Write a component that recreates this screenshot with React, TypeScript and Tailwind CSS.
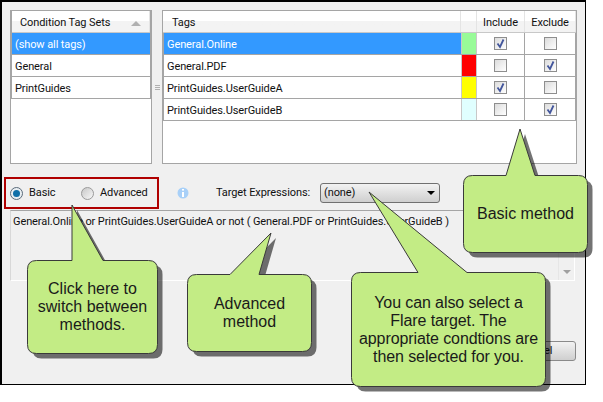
const rows = [
  { name: "General.Online", swatch: "bg-[#98fb98]", include: true, selected: true },
  { name: "General.PDF", swatch: "bg-[#ff0000]", include: false, selected: false },
  { name: "PrintGuides.UserGuideA", swatch: "bg-[#ffff00]", include: true, selected: false },
  { name: "PrintGuides.UserGuideB", swatch: "bg-[#e0ffff]", include: false, selected: false },
]

const tagSets = ["(show all tags)", "General", "PrintGuides"]

// body box + tail: tip point, then the two points where the tail meets the body edge
const balloon = (
  x1: number,
  y1: number,
  x2: number,
  y2: number,
  tipX: number,
  tipY: number,
  baseA: number,
  baseB: number,
) => {
  const r = 9
  return [
    `M${x1 + r} ${y1}`,
    `L${baseA} ${y1}`,
    `L${tipX} ${tipY}`,
    `L${baseB} ${y1}`,
    `L${x2 - r} ${y1}`,
    `Q${x2} ${y1} ${x2} ${y1 + r}`,
    `L${x2} ${y2 - r}`,
    `Q${x2} ${y2} ${x2 - r} ${y2}`,
    `L${x1 + r} ${y2}`,
    `Q${x1} ${y2} ${x1} ${y2 - r}`,
    `L${x1} ${y1 + r}`,
    `Q${x1} ${y1} ${x1 + r} ${y1}`,
    "Z",
  ].join(" ")
}

const balloons = [
  balloon(463.5, 175.5, 587.5, 252.5, 520, 129, 506, 535),
  balloon(27.5, 260.5, 157.5, 353.5, 72, 205, 72, 103),
  balloon(187.5, 274.5, 311.5, 351.5, 271, 233, 230, 259),
  balloon(351.5, 272.5, 545.5, 386.5, 369, 192, 418, 467),
]

const HeaderCell = ({ className, children }: { className: string; children?: React.ReactNode }) => (
  <div
    className={`flex h-[21px] items-center border-r border-[#e4e4e4] bg-gradient-to-b from-white from-50% to-[#f3f3f3] to-50% pt-[4px] ${className}`}
  >
    {children}
  </div>
)

const Checkbox = ({ checked }: { checked: boolean }) => (
  <div className="flex h-[13px] w-[13px] items-center justify-center border border-[#8e8e8e] bg-gradient-to-br from-[#dcdcdc] to-white">
    {checked && (
      <svg width="11" height="11" viewBox="0 0 11 11">
        <path d="M2.5 5.5 L5 9 L8.5 1.5" fill="none" stroke="#43569c" strokeWidth="1.8" />
      </svg>
    )}
  </div>
)

export default function App() {
  return (
    <div className="relative h-[402px] w-[603px] overflow-hidden bg-white font-['Roboto',sans-serif] text-[11px] tracking-[-0.1px] text-[#111]">
      <div className="flex h-[385px] w-[586px] flex-col border-t-2 border-r border-b border-l-2 border-black bg-[#f0f0f0] pt-2 pl-2">
        <div className="flex items-center">
          <div className="h-[154px] w-[142px] border border-[#a5a5a5] bg-white">
            <div className="border-x border-[#a5a5a5]">
              <div className="flex border-b border-[#c8c8c8]">
                <HeaderCell className="w-full justify-between pr-2 pl-2 text-[#111]">
                  <span>Condition Tag Sets</span>
                  <span className="h-0 w-0 border-x-[5px] border-b-[5px] border-x-transparent border-b-[#b0b0b0]" />
                </HeaderCell>
              </div>
              {tagSets.map((name, i) => (
                <div
                  key={name}
                  className={`flex h-[22px] items-center border-b border-[#a5a5a5] pt-[3px] pl-[3px] ${i === 0 ? "bg-[#3399ff] text-white" : "bg-white"}`}
                >
                  {name}
                </div>
              ))}
            </div>
          </div>
          <div className="flex w-[10px] flex-col items-center gap-px">
            <span className="h-px w-[5px] bg-[#b0b0b0]" />
            <span className="h-px w-[5px] bg-[#b0b0b0]" />
            <span className="h-px w-[5px] bg-[#b0b0b0]" />
          </div>
          <div className="h-[154px] w-[415px] border border-[#a5a5a5] bg-white">
            <div className="flex border-b border-[#c8c8c8]">
              <HeaderCell className="w-[298px] pl-[9px]">Tags</HeaderCell>
              <HeaderCell className="w-[16px]" />
              <HeaderCell className="w-[48px] justify-center">Include</HeaderCell>
              <HeaderCell className="w-[51px] justify-center">Exclude</HeaderCell>
            </div>
            {rows.map((row) => (
              <div key={row.name} className="flex h-[22px] border-b border-[#a5a5a5]">
                <div
                  className={`flex w-[298px] items-center border-l border-[#a5a5a5] pt-[3px] pl-[3px] ${row.selected ? "bg-[#3399ff] text-white" : ""}`}
                >
                  {row.name}
                </div>
                <div className={`w-[16px] border-x border-[#c8c8c8] ${row.swatch}`} />
                <div className="flex w-[48px] items-center justify-center border-r border-[#a5a5a5]">
                  <Checkbox checked={row.include} />
                </div>
                <div className="flex w-[51px] items-center justify-center border-r border-[#a5a5a5]">
                  <Checkbox checked={!row.include} />
                </div>
              </div>
            ))}
          </div>
        </div>

        <div className="mt-[19px] flex h-[20px] items-center">
          <span className="flex h-[13px] w-[13px] items-center justify-center rounded-full border border-[#5b6b7a] bg-[#e8eef2]">
            <span className="h-[7px] w-[7px] rounded-full bg-[#0f6fa8]" />
          </span>
          <span className="ml-[6px] w-[52px] pt-[1px]">Basic</span>
          <span className="h-[13px] w-[13px] rounded-full border border-[#9a9a9a] bg-gradient-to-br from-[#c8c8c8] to-[#f8f8f8]" />
          <span className="ml-[6px] w-[77px] pt-[1px]">Advanced</span>
          <svg width="12" height="12" viewBox="0 0 12 12">
            <circle cx="6" cy="6" r="5.5" fill="#a8d0f8" />
            <rect x="5" y="2" width="2" height="1.6" fill="#fff" />
            <rect x="5" y="5" width="2" height="5" fill="#fff" />
          </svg>
          <span className="ml-[27px] w-[104px] pt-[1px]">Target Expressions:</span>
          <div className="flex h-[20px] w-[120px] items-center justify-between rounded-[3px] border border-[#707070] bg-gradient-to-b from-[#f2f2f2] to-[#cfcfcf] pr-[4px] pl-[3px]">
            <span className="pt-[1px]">(none)</span>
            <span className="h-0 w-0 border-x-[4px] border-t-[4px] border-x-transparent border-t-black" />
          </div>
        </div>

        <div className="mt-[7px] flex h-[71px] w-[565px] justify-between border border-t-[#a5a5a5] border-r-white border-b-white border-l-[#d8d8d8] pl-[2px]">
          <span className="mt-[3px]">
            General.Online or PrintGuides.UserGuideA or not ( General.PDF or PrintGuides.UserGuideB )
          </span>
          <div className="flex w-[16px] items-end justify-center border-l border-[#e6e6e6] pb-[6px]">
            <span className="h-0 w-0 border-x-[4px] border-t-[4px] border-x-transparent border-t-[#a0a0a0]" />
          </div>
        </div>

        <div className="mt-[60px] flex w-[566px] justify-end">
          <div className="flex h-[20px] w-[80px] items-center justify-center rounded-[3px] border border-[#8a8a8a] bg-gradient-to-b from-[#f2f2f2] to-[#cfcfcf]">
            Cancel
          </div>
        </div>
      </div>

      <div className="absolute top-[177px] left-[4px] h-[32px] w-[155px] border-2 border-[#b00000]" />

      <svg className="absolute top-0 left-0" width="603" height="402" viewBox="0 0 603 402">
        {balloons.map((d) => (
          <g key={d}>
            <path d={d} transform="translate(5 5)" fill="#000" fillOpacity="0.55" />
            <path d={d} fill="#c3ec85" stroke="#3a3a3a" strokeWidth="1" />
          </g>
        ))}
      </svg>

      <div className="absolute top-[175px] left-[463px] flex h-[78px] w-[125px] items-center justify-center text-center font-['Liberation_Sans',sans-serif] text-[16px] leading-[18px] tracking-normal text-[#1a1a1a]">
        Basic method
      </div>
      <div className="absolute top-[260px] left-[27px] flex h-[94px] w-[131px] items-center justify-center text-center font-['Liberation_Sans',sans-serif] text-[16px] leading-[18px] tracking-normal text-[#1a1a1a]">
        <span>
          Click here to
          <br />
          switch between
          <br />
          methods.
        </span>
      </div>
      <div className="absolute top-[274px] left-[187px] flex h-[78px] w-[125px] items-center justify-center text-center font-['Liberation_Sans',sans-serif] text-[16px] leading-[18px] tracking-normal text-[#1a1a1a]">
        <span>
          Advanced
          <br />
          method
        </span>
      </div>
      <div className="absolute top-[272px] left-[351px] flex h-[115px] w-[195px] items-center justify-center text-center font-['Liberation_Sans',sans-serif] text-[16px] leading-[18px] tracking-[-0.1px] text-[#1a1a1a]">
        <span>
          You can also select a
          <br />
          Flare target. The
          <br />
          appropriate condtions are
          <br />
          then selected for you.
        </span>
      </div>
    </div>
  )
}
